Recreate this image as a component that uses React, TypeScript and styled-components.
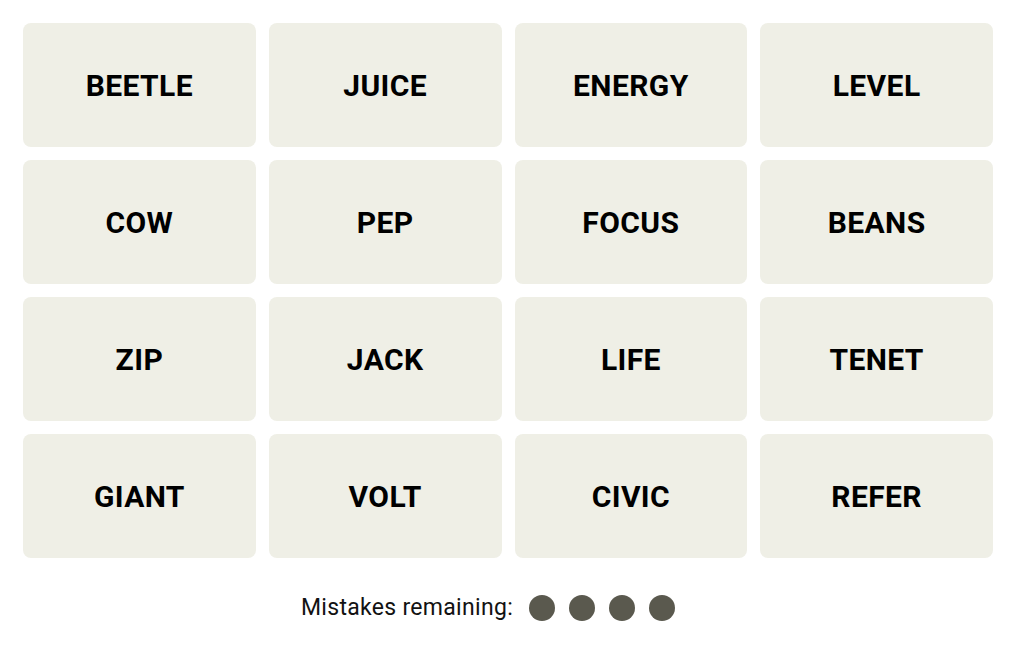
import React from 'react';
import styled, { createGlobalStyle } from 'styled-components';

const words: string[] = [
  'BEETLE', 'JUICE', 'ENERGY', 'LEVEL',
  'COW', 'PEP', 'FOCUS', 'BEANS',
  'ZIP', 'JACK', 'LIFE', 'TENET',
  'GIANT', 'VOLT', 'CIVIC', 'REFER',
];

const GlobalStyle = createGlobalStyle`
  html, body {
    margin: 0;
    padding: 0;
    background: #ffffff;
  }
  body {
    font-family: Roboto, "Liberation Sans", sans-serif;
  }
`;

const Page = styled.div`
  width: 1024px;
  height: 645px;
  box-sizing: border-box;
  padding: 23px 0 0 23px;
  display: flex;
  flex-direction: column;
`;

const Board = styled.div`
  width: 970px;
  display: grid;
  grid-template-columns: repeat(4, 1fr);
  grid-auto-rows: 124px;
  column-gap: 13px;
  row-gap: 13px;
`;

const Tile = styled.button`
  border: none;
  border-radius: 8px;
  background: #efefe6;
  display: flex;
  align-items: center;
  justify-content: center;
  font-family: Roboto, "Liberation Sans", sans-serif;
  font-weight: 700;
  font-size: 30px;
  letter-spacing: 0.4px;
  color: #000000;
  padding: 0;
  cursor: pointer;
`;

const Footer = styled.div`
  width: 970px;
  box-sizing: border-box;
  margin-top: 36px;
  display: flex;
  align-items: center;
  justify-content: center;
  padding-right: 40px;
  gap: 16px;
`;

const Label = styled.span`
  font-size: 23px;
  letter-spacing: 0.3px;
  color: #121212;
`;

const Dots = styled.div`
  display: flex;
  gap: 14px;
`;

const Dot = styled.span`
  width: 26px;
  height: 26px;
  border-radius: 50%;
  background: #5a594e;
`;

const App: React.FC = () => {
  return (
    <>
      <GlobalStyle />
      <Page>
        <Board>
          {words.map(w => (
            <Tile key={w}>{w}</Tile>
          ))}
        </Board>
        <Footer>
          <Label>Mistakes remaining:</Label>
          <Dots>
            {[0, 1, 2, 3].map(i => (
              <Dot key={i} />
            ))}
          </Dots>
        </Footer>
      </Page>
    </>
  );
};

export default App;
